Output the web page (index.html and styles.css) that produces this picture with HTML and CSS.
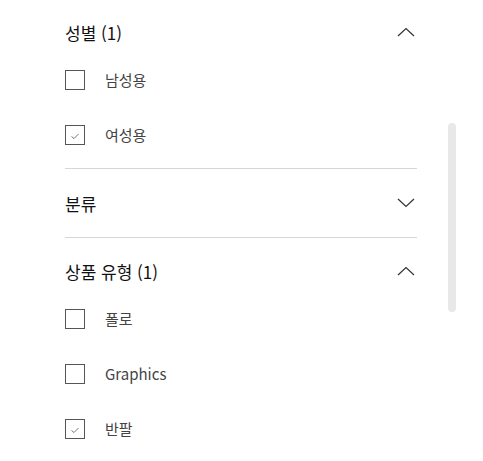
FILE: index.html
```html
<!DOCTYPE html>
<html lang="ko">
<head>
<meta charset="utf-8">
<link rel="stylesheet" href="styles.css">
</head>
<body>
<div class="panel">
  <div class="filters">
    <section class="section">
      <div class="head">
        <span class="title">성별 (1)</span>
        <svg class="chev" width="18" height="10" viewBox="0 0 18 10"><path d="M1 9 L9 1.5 L17 9" fill="none" stroke="#333" stroke-width="1.2"/></svg>
      </div>
      <label class="item"><span class="box"></span><span class="label">남성용</span></label>
      <label class="item"><span class="box checked"><svg width="10" height="8" viewBox="0 0 10 8"><path d="M1.5 4.5 L4 6.5 L8.5 2" fill="none" stroke="#666" stroke-width="0.9"/></svg></span><span class="label">여성용</span></label>
    </section>
    <section class="section collapsed">
      <div class="head">
        <span class="title">분류</span>
        <svg class="chev" width="18" height="10" viewBox="0 0 18 10"><path d="M1 1 L9 8.5 L17 1" fill="none" stroke="#333" stroke-width="1.2"/></svg>
      </div>
    </section>
    <section class="section last">
      <div class="head">
        <span class="title">상품 유형 (1)</span>
        <svg class="chev" width="18" height="10" viewBox="0 0 18 10"><path d="M1 9 L9 1.5 L17 9" fill="none" stroke="#333" stroke-width="1.2"/></svg>
      </div>
      <label class="item"><span class="box"></span><span class="label">폴로</span></label>
      <label class="item"><span class="box"></span><span class="label">Graphics</span></label>
      <label class="item"><span class="box checked"><svg width="10" height="8" viewBox="0 0 10 8"><path d="M1.5 4.5 L4 6.5 L8.5 2" fill="none" stroke="#666" stroke-width="0.9"/></svg></span><span class="label">반팔</span></label>
    </section>
  </div>
  <div class="track"><div class="thumb"></div></div>
</div>
</body>
</html>
```
FILE: styles.css
```css
html, body {
  margin: 0;
  padding: 0;
  background: #fff;
}
body {
  font-family: "Noto Sans CJK KR", "Noto Sans", sans-serif;
  color: #222;
  overflow: hidden;
}
.panel {
  display: flex;
  padding-left: 65px;
  height: 461px;
}
.filters {
  width: 352px;
  flex: none;
}
.section {
  padding: 14px 0 6px;
  border-bottom: 1px solid #d6d6d6;
}
.section:first-child {
  padding-top: 12px;
}
.section.collapsed {
  padding-bottom: 14px;
}
.section.last {
  border-bottom: none;
  padding-top: 13px;
}
.head {
  height: 40px;
  display: flex;
  align-items: center;
  justify-content: space-between;
}
.title {
  font-size: 17px;
  font-weight: 400;
  color: #111;
}
.chev {
  display: block;
  margin-right: 2px;
}
.item {
  height: 55px;
  display: flex;
  align-items: center;
  gap: 20px;
}
.box {
  width: 18px;
  height: 18px;
  border: 1px solid #555;
  display: flex;
  align-items: center;
  justify-content: center;
  flex: none;
}
.box svg {
  display: block;
  margin-top: 2px;
}
.label {
  font-size: 15px;
  color: #444;
}
.track {
  margin-left: 31px;
  padding-top: 123px;
}
.thumb {
  width: 8px;
  height: 189px;
  border-radius: 4px;
  background: #e8e8e8;
}
```
